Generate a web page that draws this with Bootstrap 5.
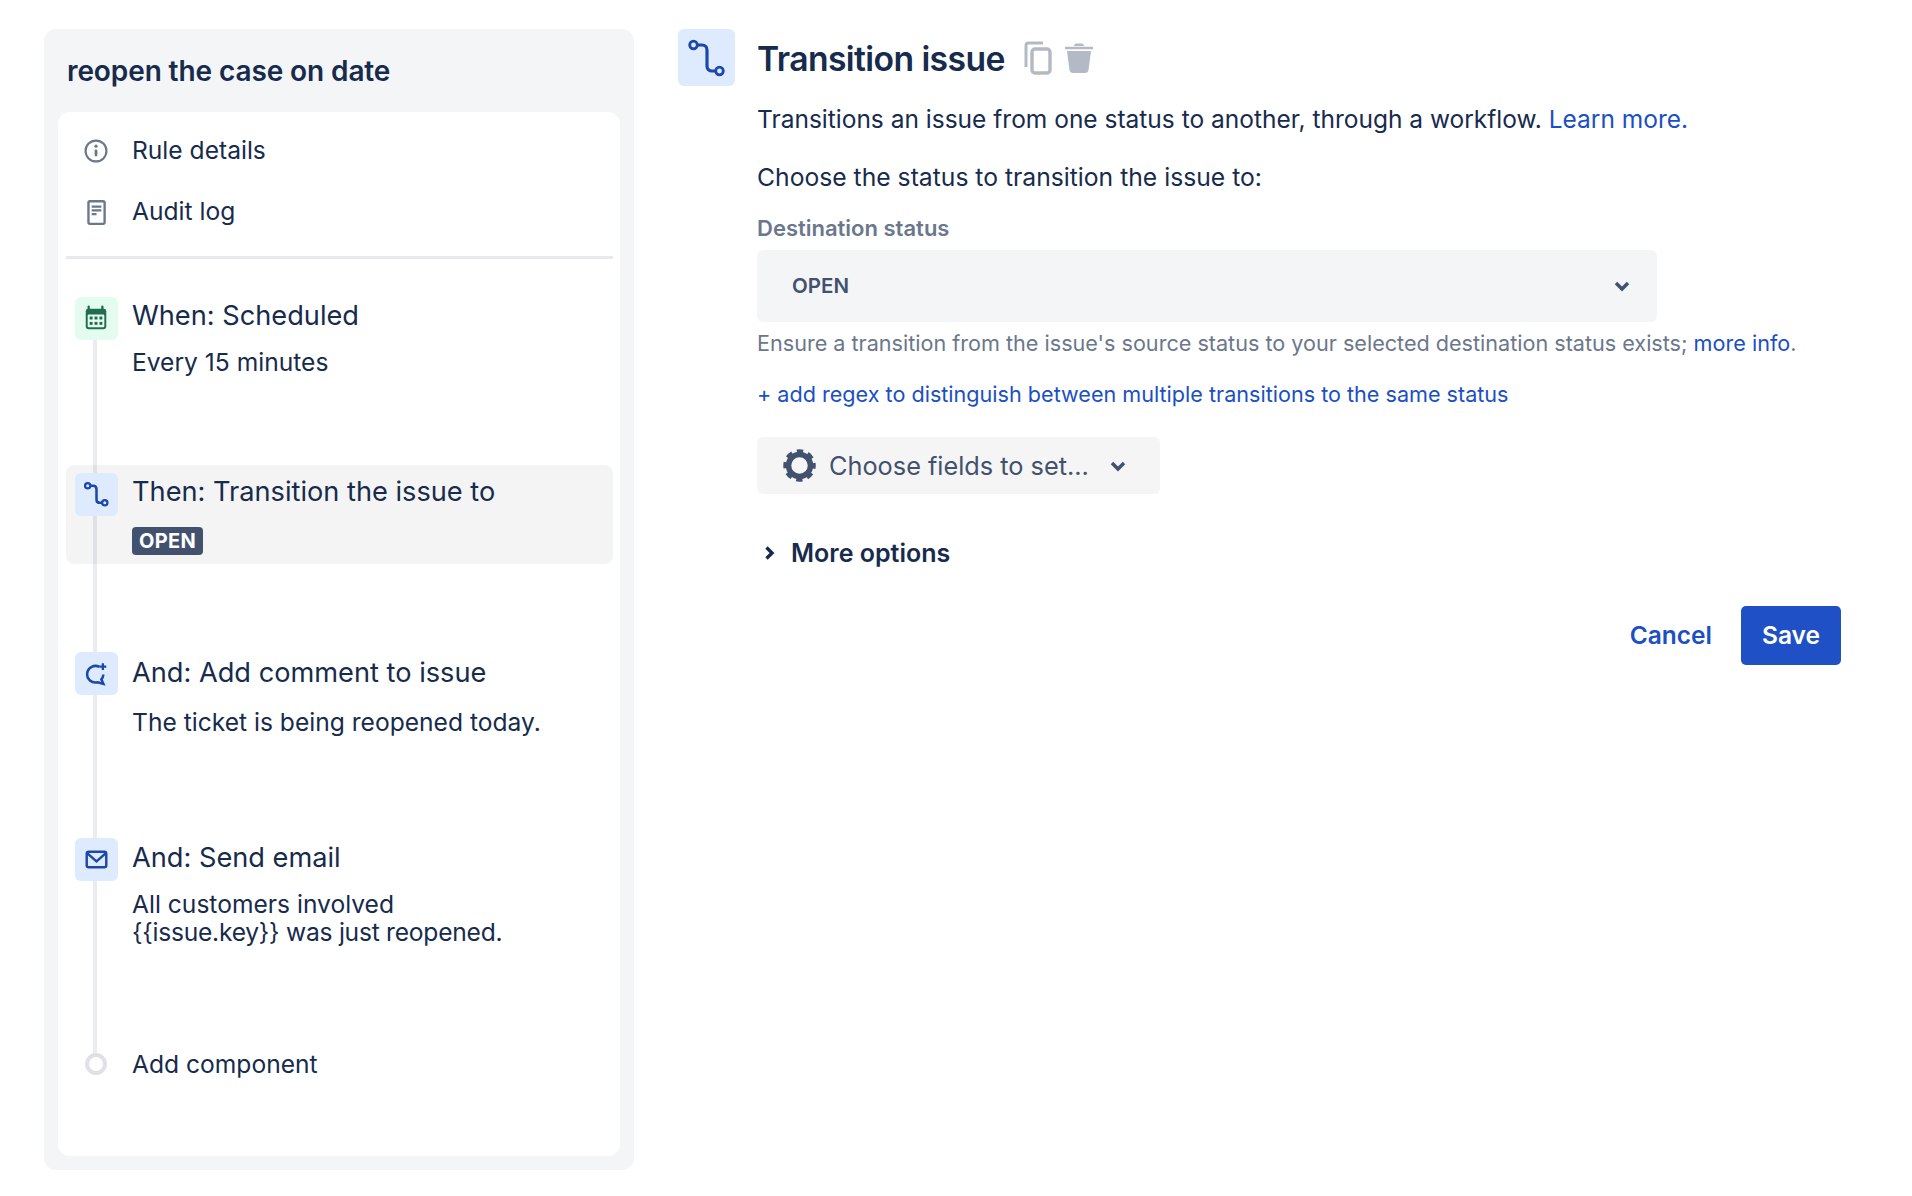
<!DOCTYPE html>
<html lang="en">
<head>
<meta charset="utf-8">
<title>Transition issue</title>
<link href="https://cdn.jsdelivr.net/npm/bootstrap@5.3.0/dist/css/bootstrap.min.css" rel="stylesheet">
<style>
body{font-family:Inter,"Noto Sans",sans-serif;color:#172b4d;background:#fff;font-size:24.6px;height:1196px;overflow:hidden}
a{color:#1b4fc4;text-decoration:none}
.shell{padding:29px 0 0 44px;gap:44px}
.rail{width:590px;height:1141px;background:#f4f5f7;border-radius:12px;padding:0 14px 14px;flex:none}
.rail-title{height:83px;margin:0;padding:0 9px;font-size:28px;font-weight:600;line-height:85px;letter-spacing:-.1px}
.rail-body{height:1044px;background:#fff;border-radius:12px;padding:8px 7px 0 8px;position:relative}
.menu-row{height:61px;gap:24px;padding-left:18px}
.menu-row svg{width:24px;height:28px;flex:none}
.rail-rule{height:3px;background:#e8e9ee;margin:14px 0 38px}
.spine{position:absolute;left:35px;top:228px;width:4px;height:715px;background:#ebecf0}
.step{position:relative;gap:14px;padding-left:9px}
.step-when{height:168px}
.step-then{height:99px;padding-top:8px;margin-bottom:88px;background:rgba(0,0,0,.045);border-radius:8px}
.step-comment{height:186px}
.step-mail{height:206px}
.tile{width:43px;height:43px;border-radius:6px;background:#deebff;flex:none;display:block}
.tile-green{background:#e3fcef}
.step-name{font-size:27.2px;line-height:40px}
.step-when .step-name{margin-top:-1px}
.step-then .step-name{margin-top:-1px}
.step-comment .step-name{margin-top:1px}
.step-note{line-height:29px;margin-top:15px}
.step-when .step-note{margin-top:12px}
.step-mail .step-note{margin-top:12px;line-height:28px}
.note-tight{letter-spacing:-.24px}
.step-add{gap:25px;padding-left:12px;height:40px;position:relative}
.step-dot{width:22px;height:22px;border:4px solid #dfe1e6;border-radius:50%;background:#fff;flex:none;margin-left:7px}
.step-tag{display:inline-block;background:#42526e;color:#fff;font-size:20px;font-weight:700;line-height:28px;height:28px;padding:0 7px;border-radius:4px;margin-top:15px;letter-spacing:.3px;vertical-align:top}
.pane{width:1162px;flex:none}
.pane-head{gap:22px;height:57px}
.pane-tile{width:57px;height:57px;border-radius:6px;background:#deebff;flex:none}
.pane-title{font-size:33.7px;font-weight:600;margin:0;padding-top:2px;line-height:57px;letter-spacing:-.6px}
.pane-tools{gap:11px;margin-left:-4px}
.pane-body{padding-left:79px}
.pane-text{margin:0;line-height:30px}
.pane-intro{margin-top:18px;font-size:24.5px}
.pane-ask{margin-top:28px;font-size:24.7px}
.field-label{font-size:22px;font-weight:600;color:#6b778c;line-height:28px;margin-top:22px}
.status-select{width:900px;height:72px;background:#f4f5f7;border-radius:6px;padding:0 27px 0 35px;margin-top:8px;color:#42526e;font-size:20.5px;font-weight:600}
.field-help{font-size:21.6px;color:#6b778c;line-height:28px;margin-top:7px}
.regex-link{display:block;font-size:21.6px;line-height:28px;margin-top:23px}
.fields-btn{width:403px;height:57px;background:#f5f5f5;border:0;border-radius:6px;margin-top:29px;padding:0 0 0 26px;color:#42526e;font-size:25.3px;gap:13px}
.more-row{margin-top:43px;font-size:25px;font-weight:600;line-height:32px;gap:16px;padding-left:7px}
.form-actions{gap:29px;margin-top:37px;width:1084px}
.cancel-link{font-size:24.5px;font-weight:600}
.save-btn{width:100px;height:59px;background:#1f50c5;border:0;border-radius:5px;color:#fff;font-size:24.5px;font-weight:600}
</style>
</head>
<body>
<div class="shell d-flex align-items-start">
  <aside class="rail">
    <h1 class="rail-title">reopen the case on date</h1>
    <div class="rail-body">
      <div class="menu-row d-flex align-items-center">
        <svg viewBox="0 0 22 26"><circle cx="11" cy="13" r="9.7" fill="none" stroke="#6b778c" stroke-width="2"/><rect x="9.700" y="11.500" width="2.600" height="6.500" rx="1.200" fill="#6b778c"/><circle cx="11" cy="8.500" r="1.500" fill="#6b778c"/></svg>
        <span>Rule details</span>
      </div>
      <div class="menu-row d-flex align-items-center">
        <svg viewBox="0 0 22 26"><rect x="4" y="3" width="15" height="21" rx="1.500" fill="none" stroke="#6b778c" stroke-width="2.200"/><path d="M7 7h9v2H7zM7 10.500h9v2H7zM7 14h4.500v2H7z" fill="#6b778c"/></svg>
        <span>Audit log</span>
      </div>
      <div class="rail-rule"></div>
      <div class="spine"></div>
      <div class="step step-when d-flex">
        <svg class="tile tile-green" viewBox="0 0 44 44"><path d="M14 10v3M28 10v3" stroke="#216e4e" stroke-width="2.400" stroke-linecap="round"/><rect x="11" y="12" width="21" height="21" rx="2.500" fill="#216e4e"/><rect x="13" y="18" width="17" height="13" rx="1" fill="#e3fcef"/><g fill="#216e4e"><rect x="15" y="20" width="3" height="3"/><rect x="20" y="20" width="3" height="3"/><rect x="25" y="20" width="3" height="3"/><rect x="15" y="25.500" width="3" height="3"/><rect x="20" y="25.500" width="3" height="3"/><rect x="25" y="25.500" width="3" height="3"/></g></svg>
        <div>
          <div class="step-name">When: Scheduled</div>
          <div class="step-note">Every 15 minutes</div>
        </div>
      </div>
      <div class="step step-then d-flex">
        <svg class="tile" viewBox="0 0 44 44"><path d="M15.500 13h3c2 0 3.500 1.500 3.500 3.500v10.500c0 2.200 1.300 3.500 3.500 3.500h3" fill="none" stroke="#1d47a8" stroke-width="2.600"/><circle cx="13" cy="13" r="2.700" fill="#deebff" stroke="#1d47a8" stroke-width="2.300"/><circle cx="30.500" cy="30.500" r="2.700" fill="#deebff" stroke="#1d47a8" stroke-width="2.300"/></svg>
        <div>
          <div class="step-name">Then: Transition the issue to</div>
          <span class="step-tag">OPEN</span>
        </div>
      </div>
      <div class="step step-comment d-flex">
        <svg class="tile" viewBox="0 0 44 44"><path d="M25 15.300A8.500 8.500 0 1 0 23 31l6 1.500-2-4.500a8.500 8.500 0 0 0 2-5" fill="none" stroke="#1d47a8" stroke-width="2.600"/><path d="M28.500 11.500v7M25 15h7" stroke="#1d47a8" stroke-width="2.300"/></svg>
        <div>
          <div class="step-name">And: Add comment to issue</div>
          <div class="step-note">The ticket is being reopened today.</div>
        </div>
      </div>
      <div class="step step-mail d-flex">
        <svg class="tile" viewBox="0 0 44 44"><rect x="12" y="14" width="20" height="16" rx="2" fill="none" stroke="#1d47a8" stroke-width="2.500"/><path d="M13 16l9 8 9-8" fill="none" stroke="#1d47a8" stroke-width="2.500"/></svg>
        <div>
          <div class="step-name">And: Send email</div>
          <div class="step-note">All customers involved<br><span class="note-tight">{{issue.key}} was just reopened.</span></div>
        </div>
      </div>
      <div class="step-add d-flex align-items-center">
        <div class="step-dot"></div>
        <span>Add component</span>
      </div>
    </div>
  </aside>
  <main class="pane">
    <div class="pane-head d-flex align-items-center">
      <svg class="pane-tile" viewBox="0 0 57 57"><path d="M19 16h5c3 0 5 2 5 5v16c0 3 2 5 5 5h4" fill="none" stroke="#1d47a8" stroke-width="3.200"/><circle cx="15.500" cy="16" r="3.800" fill="#deebff" stroke="#1d47a8" stroke-width="2.800"/><circle cx="41.500" cy="42" r="3.800" fill="#deebff" stroke="#1d47a8" stroke-width="2.800"/></svg>
      <h2 class="pane-title">Transition issue</h2>
      <div class="pane-tools d-flex align-items-center">
        <svg width="30" height="34" viewBox="0 0 30 34"><path d="M3 26V4.500C3 3 4 2 5.500 2H20" fill="none" stroke="#b3bac5" stroke-width="3"/><rect x="9" y="8" width="18" height="24" rx="3" fill="none" stroke="#b3bac5" stroke-width="3.400"/></svg>
        <svg width="30" height="34" viewBox="0 0 30 34"><path d="M1 7h28" stroke="#b3bac5" stroke-width="2.500"/><path d="M10 5q0-2.500 2.500-2.500h5Q20 2.500 20 5z" fill="#b3bac5"/><path d="M3 10h24l-2.500 19q-.4 3-3.500 3H9q-3 0-3.500-3z" fill="#b3bac5"/></svg>
      </div>
    </div>
    <div class="pane-body">
      <p class="pane-text pane-intro">Transitions an issue from one status to another, through a workflow. <a href="#">Learn more.</a></p>
      <p class="pane-text pane-ask">Choose the status to transition the issue to:</p>
      <div class="field-label">Destination status</div>
      <div class="status-select d-flex align-items-center justify-content-between">
        <span>OPEN</span>
        <svg width="16" height="12" viewBox="0 0 16 12"><path d="M2 3l6 6 6-6" fill="none" stroke="#42526e" stroke-width="3.500"/></svg>
      </div>
      <div class="field-help">Ensure a transition from the issue's source status to your selected destination status exists; <a href="#">more info</a>.</div>
      <a class="regex-link" href="#">+ add regex to distinguish between multiple transitions to the same status</a>
      <button type="button" class="fields-btn d-flex align-items-center">
        <svg width="33" height="33" viewBox="0 0 33 33"><circle cx="16.500" cy="16.500" r="11" fill="none" stroke="#42526e" stroke-width="5.500"/><circle cx="16.500" cy="16.500" r="14.500" fill="none" stroke="#42526e" stroke-width="3.500" stroke-dasharray="6.400 5" stroke-dashoffset="3.200"/></svg>
        <span>Choose fields to set...</span>
        <svg class="ms-2" width="16" height="12" viewBox="0 0 16 12"><path d="M2 3l6 6 6-6" fill="none" stroke="#42526e" stroke-width="3.500"/></svg>
      </button>
      <div class="more-row d-flex align-items-center">
        <svg width="11" height="16" viewBox="0 0 11 16"><path d="M2.500 2.500l5.500 5.500-5.500 5.500" fill="none" stroke="#172b4d" stroke-width="3.400"/></svg>
        <span>More options</span>
      </div>
      <div class="form-actions d-flex justify-content-end align-items-center">
        <a class="cancel-link" href="#">Cancel</a>
        <button type="button" class="save-btn">Save</button>
      </div>
    </div>
  </main>
</div>
<script src="https://cdn.jsdelivr.net/npm/bootstrap@5.3.0/dist/js/bootstrap.bundle.min.js"></script>
</body>
</html>
